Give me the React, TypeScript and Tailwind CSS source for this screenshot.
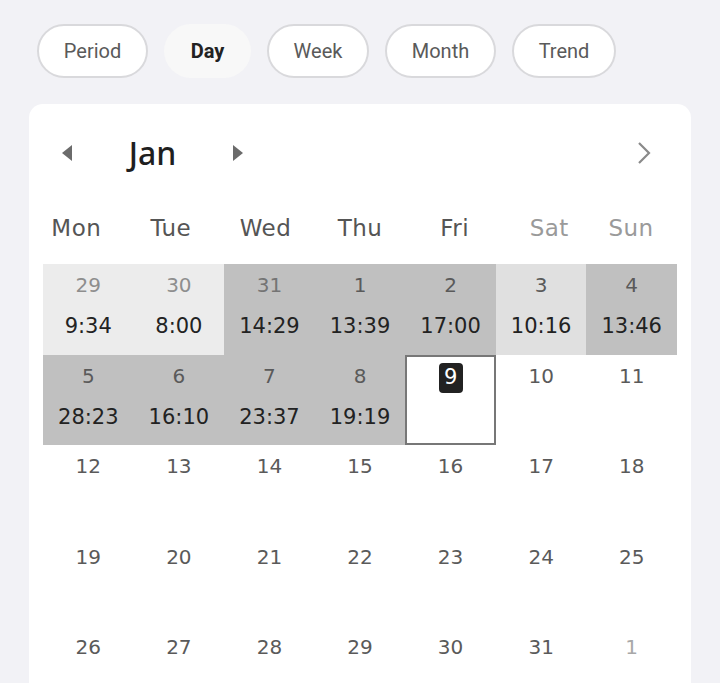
import React from "react";

type Cell = { d: string; t?: string; bg?: string; dc?: string; today?: boolean };

const DARK = "bg-[#c0c0c0]";
const LIGHT = "bg-[#ececec]";
const MID = "bg-[#e0e0e0]";

const rows: Cell[][] = [
  [
    { d: "29", t: "9:34", bg: LIGHT, dc: "text-[#8e8e8e]" },
    { d: "30", t: "8:00", bg: LIGHT, dc: "text-[#8e8e8e]" },
    { d: "31", t: "14:29", bg: DARK, dc: "text-[#747474]" },
    { d: "1", t: "13:39", bg: DARK },
    { d: "2", t: "17:00", bg: DARK },
    { d: "3", t: "10:16", bg: MID },
    { d: "4", t: "13:46", bg: DARK },
  ],
  [
    { d: "5", t: "28:23", bg: DARK },
    { d: "6", t: "16:10", bg: DARK },
    { d: "7", t: "23:37", bg: DARK },
    { d: "8", t: "19:19", bg: DARK },
    { d: "9", today: true },
    { d: "10" },
    { d: "11" },
  ],
  ["12", "13", "14", "15", "16", "17", "18"].map((d) => ({ d })),
  ["19", "20", "21", "22", "23", "24", "25"].map((d) => ({ d })),
  [
    ...["26", "27", "28", "29", "30", "31"].map((d) => ({ d })),
    { d: "1", dc: "text-[#a8a8a8]" },
  ],
];

const pills: { label: string; w: string }[] = [
  { label: "Period", w: "w-[111px]" },
  { label: "Day", w: "w-[87px]" },
  { label: "Week", w: "w-[102px]" },
  { label: "Month", w: "w-[111px]" },
  { label: "Trend", w: "w-[104px]" },
];
const days = ["Mon", "Tue", "Wed", "Thu", "Fri", "Sat"];

export default function App() {
  return (
    <div className="w-[720px] h-[683px] overflow-hidden bg-[#f2f2f6]">
      <div className="flex gap-[16px] pl-[37px] pt-[24px] font-['Roboto',sans-serif]">
        {pills.map((p) =>
          p.label === "Day" ? (
            <div
              key={p.label}
              className={`${p.w} h-[54px] flex items-center justify-center rounded-full bg-[#f8f8f8] text-[20px] font-bold text-[#222]`}
            >
              {p.label}
            </div>
          ) : (
            <div
              key={p.label}
              className={`${p.w} h-[54px] flex items-center justify-center rounded-full bg-white border-2 border-[#d9d9dc] text-[20px] text-[#5a5a5a]`}
            >
              {p.label}
            </div>
          )
        )}
      </div>

      <div className="ml-[29px] mt-[26px] w-[662px] h-[600px] rounded-[14px] bg-white font-['DejaVu_Sans',sans-serif]">
        <div className="flex items-center h-[96px] pt-[2px]">
          <div className="pl-[33px]">
            <svg width="10" height="16" viewBox="0 0 10 16" className="block">
              <path d="M10 0 L0 8 L10 16 Z" fill="#6b6b6b" />
            </svg>
          </div>
          <div className="w-[161px] text-center text-[32px] font-medium text-[#1f1f1f] font-['Noto_Sans',sans-serif]">
            Jan
          </div>
          <div>
            <svg width="10" height="16" viewBox="0 0 10 16" className="block">
              <path d="M0 0 L10 8 L0 16 Z" fill="#6b6b6b" />
            </svg>
          </div>
          <div className="ml-auto mr-[39px]">
            <svg width="16" height="24" viewBox="0 0 16 24" className="block">
              <path d="M3 2 L13 12 L3 22" fill="none" stroke="#8a8a8a" strokeWidth="2.2" />
            </svg>
          </div>
        </div>

        <div className="flex h-[64px] items-center pb-[8px]">
          {days.map((d, i) => (
            <div
              key={d}
              className={`w-[94.6px] text-center text-[23px] tracking-[0.5px] ${i >= 5 ? "text-[#9a9a9a]" : "text-[#555]"}`}
            >
              {d}
            </div>
          ))}
          <div className="w-[69px] text-center text-[23px] tracking-[0.5px] text-[#9a9a9a]">Sun</div>
        </div>

        <div className="ml-[14px] w-[634px]">
          {rows.map((r, ri) => (
            <div key={ri} className="grid grid-cols-7 h-[90.5px]">
              {r.map((c, ci) => (
                <div
                  key={ci}
                  className={`flex flex-col items-center ${c.bg ?? ""} ${c.today ? "border-2 border-[#777]" : ""}`}
                >
                  {c.today ? (
                    <div className="mt-[6px] w-[24px] h-[30px] rounded-[4px] bg-[#222] text-white text-[21px] flex items-center justify-center">
                      {c.d}
                    </div>
                  ) : (
                    <div className={`mt-[8px] text-[20px] leading-[26px] ${c.dc ?? "text-[#5a5a5a]"}`}>{c.d}</div>
                  )}
                  {c.t && <div className="mt-[14px] text-[21px] leading-[28px] text-[#222]">{c.t}</div>}
                </div>
              ))}
            </div>
          ))}
        </div>
      </div>
    </div>
  );
}
